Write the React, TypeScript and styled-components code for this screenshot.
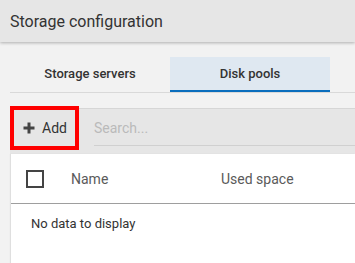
import { createGlobalStyle, styled } from "styled-components";

const GlobalStyle = createGlobalStyle`
  html, body {
    margin: 0;
    padding: 0;
    background: #f2f2f2;
    font-family: Roboto, "Liberation Sans", Arial, sans-serif;
    overflow: hidden;
  }
`;

const Page = styled.div`
  width: 355px;
  height: 263px;
  display: flex;
  flex-direction: column;
  background: #f2f2f2;
  overflow: hidden;
`;

const Header = styled.div`
  height: 42px;
  flex-shrink: 0;
  display: flex;
  align-items: center;
  padding-left: 10px;
  background: #e6e6e6;
  box-shadow: 0 1px 3px rgba(0, 0, 0, 0.28);
  font-size: 16px;
  color: #333;
  position: relative;
  z-index: 1;
`;

const Content = styled.div`
  flex: 1;
  display: flex;
  flex-direction: column;
  padding: 15px 0 0 10px;
  min-height: 0;
`;

const Tabs = styled.div`
  display: flex;
  border-bottom: 1px solid #d9d9d9;
`;

const Tab = styled.div<{ $active?: boolean }>`
  width: 160px;
  height: 33px;
  display: flex;
  align-items: center;
  justify-content: center;
  font-size: 13px;
  font-weight: 500;
  color: #333;
  background: ${(p) => (p.$active ? "#dfe8f1" : "transparent")};
  border-bottom: 2px solid ${(p) => (p.$active ? "#0a6ebd" : "transparent")};
`;

const Toolbar = styled.div`
  margin-top: 15px;
  height: 44px;
  display: flex;
  align-items: flex-start;
  padding: 1px 0 0 4px;
  background: #e6e6e6;
  border-top: 1px solid #d6d6d6;
`;

const AddButton = styled.button`
  width: 61px;
  height: 36px;
  flex-shrink: 0;
  display: flex;
  align-items: center;
  gap: 7px;
  padding: 0 0 0 9px;
  border: none;
  background: transparent;
  outline: 4px solid #ff0000;
  font-family: inherit;
  font-size: 14px;
  color: #333;
`;

const SearchBox = styled.div`
  flex: 1;
  margin-left: 19px;
  height: 35px;
  display: flex;
  align-items: center;
  border-bottom: 1px solid #d0d0d0;
  font-size: 14px;
  color: #bababa;
`;

const Grid = styled.div`
  flex: 1;
  margin-left: 1px;
  background: #fff;
  box-shadow: -1px 0 1px rgba(0, 0, 0, 0.08);
`;

const HeaderRow = styled.div`
  height: 49px;
  display: flex;
  align-items: center;
  border-bottom: 1px solid #9e9e9e;
`;

const Cell = styled.div<{ $width: number }>`
  width: ${(p) => p.$width}px;
  flex-shrink: 0;
  padding-left: 15px;
  box-sizing: border-box;
  font-size: 14px;
  color: #5a5a5a;
  display: flex;
  align-items: center;
  white-space: nowrap;
`;

const CheckBox = styled.div`
  width: 18px;
  height: 18px;
  box-sizing: border-box;
  border: 2px solid #444;
`;

const EmptyRow = styled.div`
  padding: 12px 0 0 20px;
  font-size: 13px;
  color: #333;
`;

function PlusIcon() {
  return (
    <svg width="12" height="12" viewBox="0 0 12 12">
      <path d="M6 0.5v11M0.5 6h11" stroke="#444" strokeWidth="3" />
    </svg>
  );
}

export default function App() {
  return (
    <Page>
      <GlobalStyle />
      <Header>Storage configuration</Header>
      <Content>
        <Tabs>
          <Tab>Storage servers</Tab>
          <Tab $active>Disk pools</Tab>
        </Tabs>
        <Toolbar>
          <AddButton>
            <PlusIcon />
            Add
          </AddButton>
          <SearchBox>Search...</SearchBox>
        </Toolbar>
        <Grid>
          <HeaderRow>
            <Cell $width={45}>
              <CheckBox />
            </Cell>
            <Cell $width={150}>Name</Cell>
            <Cell $width={200}>Used space</Cell>
          </HeaderRow>
          <EmptyRow>No data to display</EmptyRow>
        </Grid>
      </Content>
    </Page>
  );
}
